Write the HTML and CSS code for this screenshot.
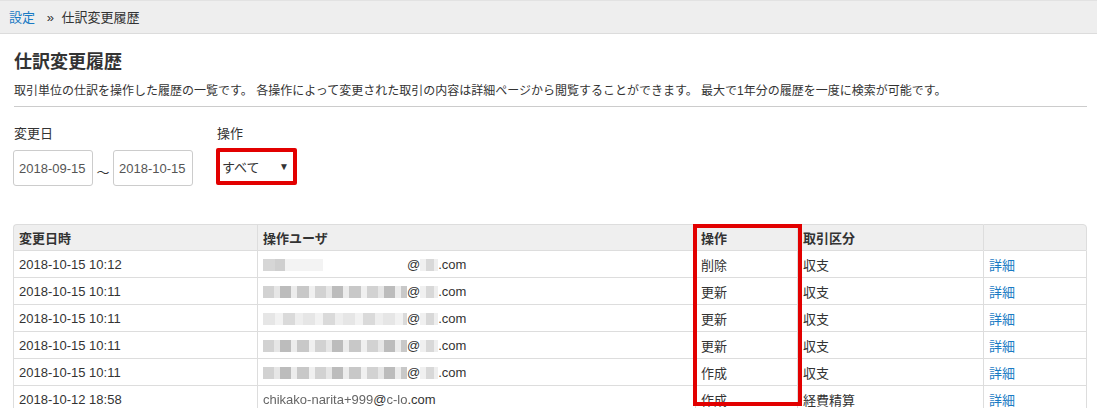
FILE: index.html
```html
<!DOCTYPE html>
<html lang="ja">
<head>
    <meta charset="UTF-8">
    <title>仕訳変更履歴</title>
    <link rel="stylesheet" href="styles.css">
</head>
<body>
    <div class="breadcrumb">
        <a href="#">設定</a>
        <span class="sep">»</span>
        <span>仕訳変更履歴</span>
    </div>

    <div class="content">
        <h1>仕訳変更履歴</h1>
        <p class="lead">取引単位の仕訳を操作した履歴の一覧です。 各操作によって変更された取引の内容は詳細ページから閲覧することができます。 最大で1年分の履歴を一度に検索が可能です。</p>
        <hr>

        <div class="filters">
            <div class="field">
                <label>変更日</label>
                <div class="range">
                    <input class="date" type="text" value="2018-09-15">
                    <span class="tilde">～</span>
                    <input class="date" type="text" value="2018-10-15">
                </div>
            </div>
            <div class="field">
                <label>操作</label>
                <div class="select marked">
                    <span>すべて</span>
                    <span class="caret">▼</span>
                </div>
            </div>
        </div>

        <div class="table-wrap">
            <table class="history">
                <thead>
                    <tr>
                        <th class="c-date">変更日時</th>
                        <th class="c-user">操作ユーザ</th>
                        <th class="c-op">操作</th>
                        <th class="c-kind">取引区分</th>
                        <th class="c-link"></th>
                    </tr>
                </thead>
                <tbody>
                    <tr>
                        <td>2018-10-15 10:12</td>
                        <td><span class="mask faint"></span><span class="gap"></span>@<span class="mask dom"></span>.com</td>
                        <td>削除</td>
                        <td>収支</td>
                        <td><a href="#">詳細</a></td>
                    </tr>
                    <tr>
                        <td>2018-10-15 10:11</td>
                        <td><span class="mask"></span>@<span class="mask dom"></span>.com</td>
                        <td>更新</td>
                        <td>収支</td>
                        <td><a href="#">詳細</a></td>
                    </tr>
                    <tr>
                        <td>2018-10-15 10:11</td>
                        <td><span class="mask light"></span>@<span class="mask dom light"></span>.com</td>
                        <td>更新</td>
                        <td>収支</td>
                        <td><a href="#">詳細</a></td>
                    </tr>
                    <tr>
                        <td>2018-10-15 10:11</td>
                        <td><span class="mask"></span>@<span class="mask dom"></span>.com</td>
                        <td>更新</td>
                        <td>収支</td>
                        <td><a href="#">詳細</a></td>
                    </tr>
                    <tr>
                        <td>2018-10-15 10:11</td>
                        <td><span class="mask"></span>@<span class="mask dom"></span>.com</td>
                        <td>作成</td>
                        <td>収支</td>
                        <td><a href="#">詳細</a></td>
                    </tr>
                    <tr>
                        <td>2018-10-12 18:58</td>
                        <td><span class="fuzzy">chikako-narita+999</span>@<span class="fuzzy">c-lo</span>.com</td>
                        <td>作成</td>
                        <td>経費精算</td>
                        <td><a href="#">詳細</a></td>
                    </tr>
                </tbody>
            </table>
            <div class="col-mark"></div>
        </div>
    </div>
</body>
</html>
```

FILE: styles.css
```css
html, body {
    margin: 0;
    padding: 0;
    background: #fff;
    color: #333;
    font-family: "Liberation Sans", "Noto Sans CJK JP", sans-serif;
    font-size: 13px;
    overflow: hidden;
}

a {
    color: #1a7bc4;
    text-decoration: none;
}

.breadcrumb {
    height: 32px;
    line-height: 34px;
    padding-left: 9px;
    background: #eeeeee;
    border-top: 1px solid #e2e2e2;
    border-bottom: 1px solid #dcdcdc;
    font-size: 13px;
}

.breadcrumb .sep {
    margin: 0 4px 0 8px;
}

.content {
    padding: 0 10px 0 13px;
}

h1 {
    margin: 16px 0 0 1px;
    font-size: 18px;
    line-height: 24px;
    font-weight: bold;
}

.lead {
    margin: 8px 0 0 1px;
    font-size: 12px;
    line-height: 18px;
}

hr {
    margin: 6px 0 0 1px;
    border: 0;
    border-top: 1px solid #cccccc;
}

.filters {
    display: flex;
    gap: 23px;
    margin-top: 18px;
}

.field label {
    display: block;
    line-height: 18px;
    margin-left: 1px;
    margin-bottom: 7px;
}

.range {
    display: flex;
    align-items: stretch;
}

.date {
    width: 80px;
    height: 36px;
    box-sizing: border-box;
    padding: 0 0 0 5px;
    border: 1px solid #cccccc;
    border-radius: 3px;
    font-family: inherit;
    font-size: 13px;
    color: #555;
}

.tilde {
    width: 20px;
    text-align: center;
    padding-top: 12px;
    font-size: 13px;
}

.select {
    width: 81px;
    height: 37px;
    margin-top: -2px;
    box-sizing: border-box;
    display: flex;
    align-items: center;
    justify-content: space-between;
    padding: 0 4px 0 2px;
    border-radius: 2px;
}

.select.marked {
    border: 4px solid #e20000;
}

.select .caret {
    font-size: 10px;
}

.table-wrap {
    position: relative;
    margin-top: 38px;
}

.history {
    width: 1074px;
    border-collapse: separate;
    border-spacing: 0;
    table-layout: fixed;
}

.history th, .history td {
    box-sizing: border-box;
    height: 27px;
    padding: 0 5px;
    text-align: left;
    border-bottom: 1px solid #dddddd;
    border-left: 1px solid #dddddd;
    white-space: nowrap;
    overflow: hidden;
}

.history th:last-child, .history td:last-child {
    border-right: 1px solid #dddddd;
}

.history th {
    background: #efefef;
    font-weight: bold;
    border-top: 1px solid #dddddd;
}

.history th:first-child {
    border-top-left-radius: 4px;
}

.history th:last-child {
    border-top-right-radius: 4px;
}

.c-date { width: 244px; }
.c-user { width: 438px; }
.c-op { width: 102px; }
.c-kind { width: 186px; }
.c-link { width: auto; }

.mask {
    display: inline-block;
    vertical-align: middle;
    width: 144px;
    height: 12px;
    background: repeating-linear-gradient(90deg,
        #d2d2d2 0 11px, #e6e6e6 11px 17px, #bcbcbc 17px 28px,
        #ececec 28px 34px, #c8c8c8 34px 46px, #f0f0f0 46px 52px);
}

.mask.light {
    background: repeating-linear-gradient(90deg,
        #e6e6e6 0 12px, #f2f2f2 12px 20px, #dadada 20px 32px, #eeeeee 32px 40px);
}

.mask.faint {
    width: 60px;
    background: linear-gradient(90deg, #d6d6d6 0 12px, #cfcfcf 12px 22px, #f3f3f3 22px 60px);
}

.gap {
    display: inline-block;
    width: 84px;
}

.mask.dom {
    width: 18px;
    background: linear-gradient(90deg, #f0f0f0 0 6px, #d8d8d8 6px 14px, #eeeeee 14px 18px);
}

.fuzzy {
    color: #666;
    filter: blur(0.6px);
}

.col-mark {
    position: absolute;
    left: 680px;
    top: 0;
    width: 109px;
    height: 182px;
    box-sizing: border-box;
    border: 4px solid #e20000;
    pointer-events: none;
}
```
